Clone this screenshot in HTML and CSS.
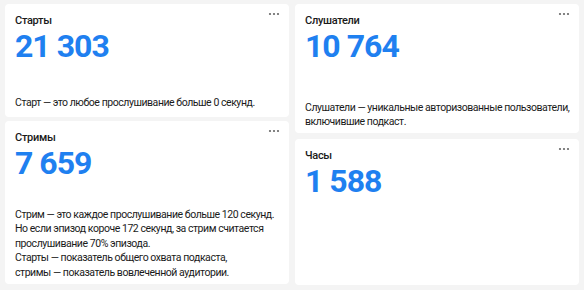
FILE: index.html
```html
<!DOCTYPE html>
<html lang="ru">
<head>
    <meta charset="UTF-8">
    <meta name="viewport" content="width=device-width, initial-scale=1.0">
    <title>Статистика подкаста</title>
    <link rel="stylesheet" href="styles.css">
</head>
<body>
    <div class="stats">
        <div class="column">
            <div class="card card-starts">
                <div class="card-head">
                    <h2>Старты</h2>
                    <svg class="more" width="12" height="4" viewBox="0 0 12 4"><circle cx="2" cy="2" r="1.1"/><circle cx="6" cy="2" r="1.1"/><circle cx="10" cy="2" r="1.1"/></svg>
                </div>
                <div class="value">21 303</div>
                <p class="hint">Старт — это любое прослушивание больше 0 секунд.</p>
            </div>
            <div class="card card-streams">
                <div class="card-head">
                    <h2>Стримы</h2>
                    <svg class="more" width="12" height="4" viewBox="0 0 12 4"><circle cx="2" cy="2" r="1.1"/><circle cx="6" cy="2" r="1.1"/><circle cx="10" cy="2" r="1.1"/></svg>
                </div>
                <div class="value">7 659</div>
                <p class="hint">Стрим — это каждое прослушивание больше 120 секунд.<br>
                    Но если эпизод короче 172 секунд, за стрим считается<br>
                    прослушивание 70% эпизода.<br>
                    Старты — показатель общего охвата подкаста,<br>
                    стримы — показатель вовлеченной аудитории.</p>
            </div>
        </div>
        <div class="column">
            <div class="card card-listeners">
                <div class="card-head">
                    <h2>Слушатели</h2>
                    <svg class="more" width="12" height="4" viewBox="0 0 12 4"><circle cx="2" cy="2" r="1.1"/><circle cx="6" cy="2" r="1.1"/><circle cx="10" cy="2" r="1.1"/></svg>
                </div>
                <div class="value">10 764</div>
                <p class="hint">Слушатели — уникальные авторизованные пользователи,<br>
                    включившие подкаст.</p>
            </div>
            <div class="card card-hours">
                <div class="card-head">
                    <h2>Часы</h2>
                    <svg class="more" width="12" height="4" viewBox="0 0 12 4"><circle cx="2" cy="2" r="1.1"/><circle cx="6" cy="2" r="1.1"/><circle cx="10" cy="2" r="1.1"/></svg>
                </div>
                <div class="value">1 588</div>
            </div>
        </div>
    </div>
</body>
</html>
```

FILE: styles.css
```css
body {
    font-family: Roboto, "Noto Sans", Arial, sans-serif;
    color: #1a1a1a;
    background-color: #f4f4f4;
    margin: 0;
    padding: 4px 5px;
}
.stats {
    display: grid;
    grid-template-columns: 284px 284px;
    gap: 6px;
}
.column {
    display: flex;
    flex-direction: column;
    gap: 4px;
}
.column + .column {
    gap: 6px;
}
.card {
    background-color: #fff;
    border-radius: 4px;
    padding: 10px 9px 7px 10px;
    display: flex;
    flex-direction: column;
    box-sizing: border-box;
}
.card-starts { height: 113px; }
.card-streams { height: 163px; padding-bottom: 4px; }
.card-streams .hint { line-height: 14.5px; }
.card-listeners { height: 129px; padding-bottom: 4px; }
.card-hours { height: 146px; }
.card-head {
    display: flex;
    justify-content: space-between;
    align-items: flex-start;
}
h2 {
    margin: 0;
    font-size: 11px;
    font-weight: 500;
    line-height: 14px;
    letter-spacing: -0.3px;
}
.more {
    fill: #666;
    margin-top: -2px;
}
.value {
    font-size: 32px;
    font-weight: 700;
    line-height: 32px;
    letter-spacing: -1px;
    color: #1f80f0;
    margin-top: 2px;
}
.hint {
    margin: auto 0 0;
    font-size: 10.5px;
    line-height: 14px;
    letter-spacing: -0.45px;
    white-space: nowrap;
}
```
